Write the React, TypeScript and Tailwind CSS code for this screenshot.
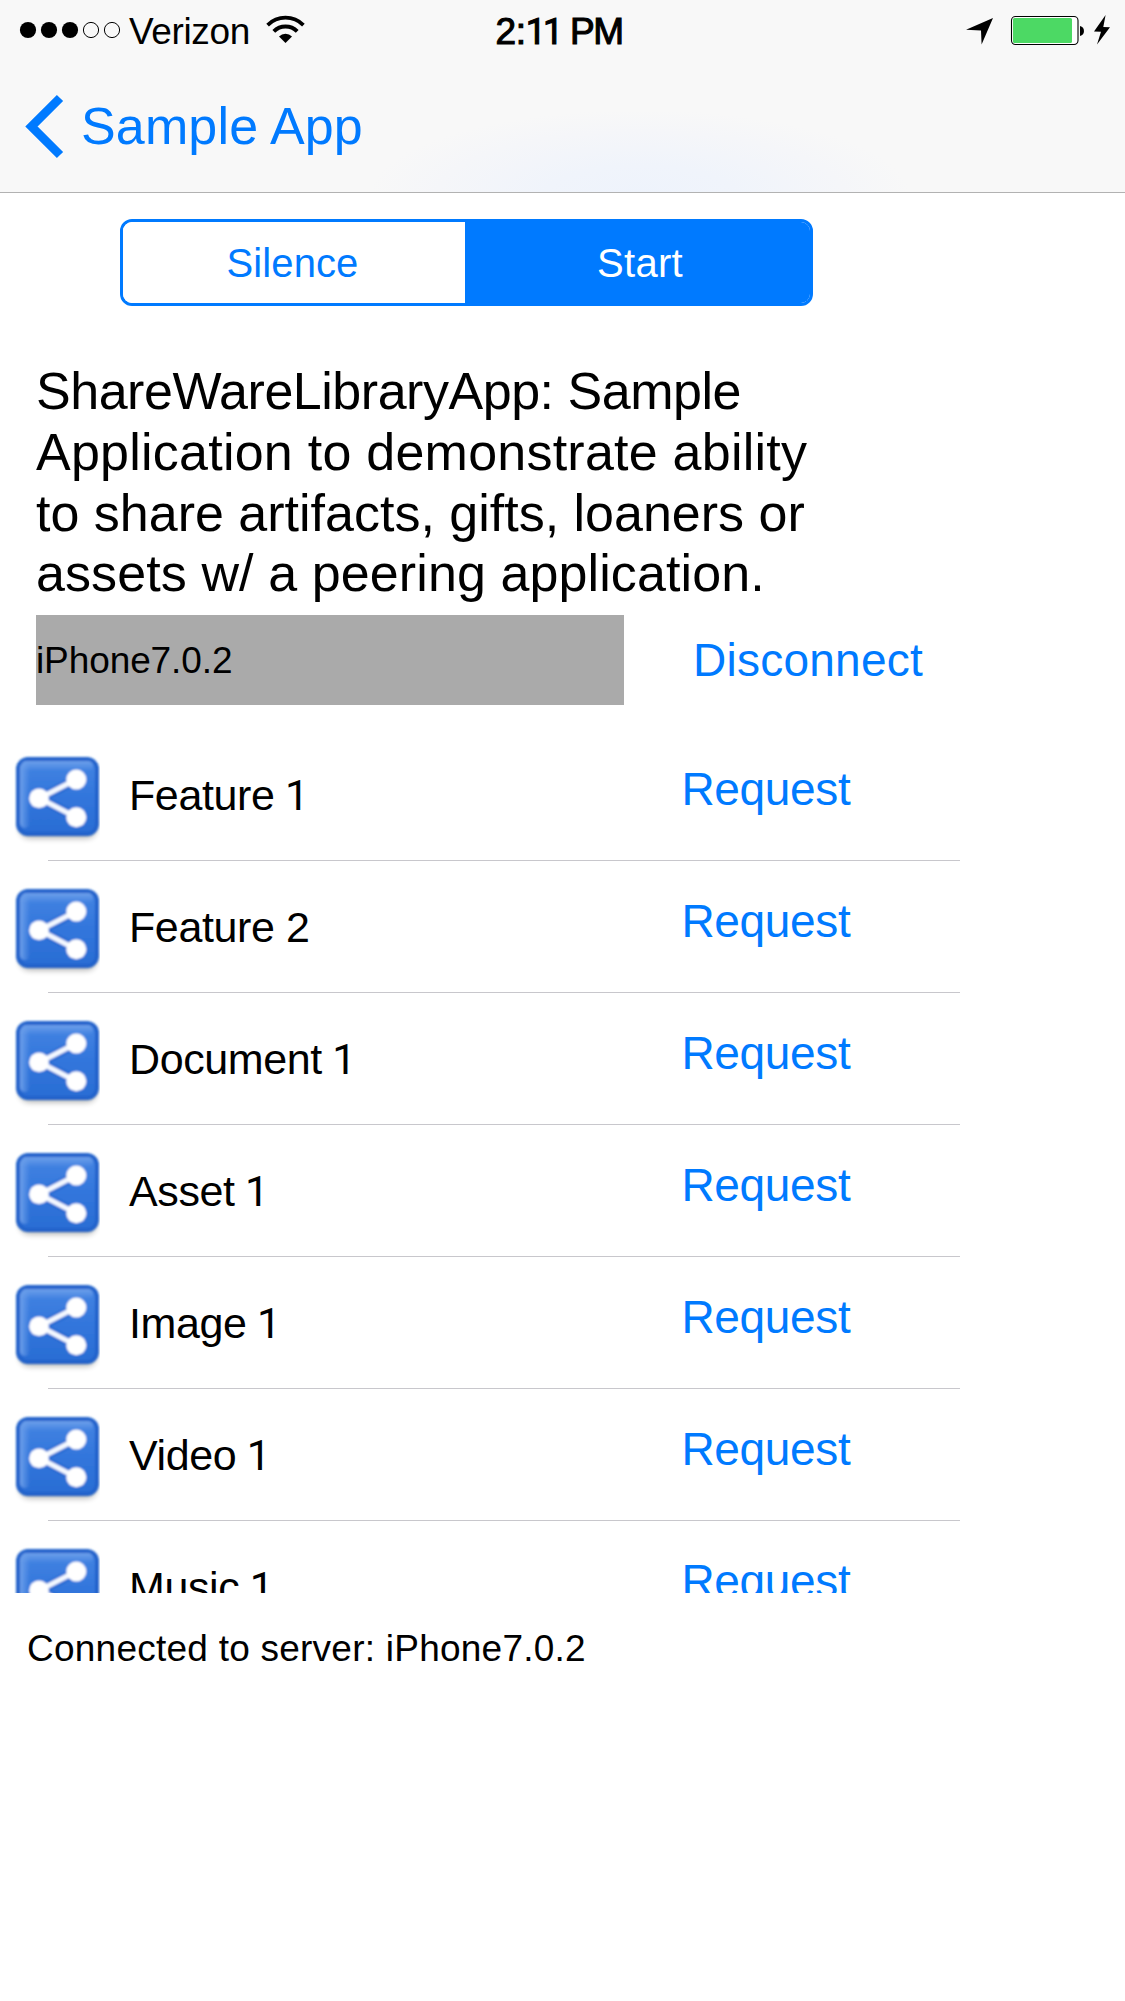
import React from "react";

const items = ["Feature 1", "Feature 2", "Document 1", "Asset 1", "Image 1", "Video 1", "Music 1"];

function Label({ text }: { text: string }) {
  const cut = text.length - 1;
  const digit = text.slice(cut);
  return (
    <span className="text-[43px] tracking-[-0.4px] leading-[133px] whitespace-pre">
      {text.slice(0, cut)}
      {digit === "1" ? <span className="font-['Roboto',sans-serif] text-[42.5px] -ml-[1px]">1</span> : digit}
    </span>
  );
}

function ShareIcon() {
  return (
    <svg className="block w-[100px] h-[110px]" viewBox="0 0 100 110">
      <defs>
        <linearGradient id="face" x1="0" y1="0" x2="0" y2="1">
          <stop offset="0" stopColor="#4484e2" />
          <stop offset="0.5" stopColor="#3276dc" />
          <stop offset="1" stopColor="#2a6dd4" />
        </linearGradient>
        <linearGradient id="shineTop" x1="0" y1="0" x2="0" y2="1">
          <stop offset="0" stopColor="#6c9fea" />
          <stop offset="1" stopColor="#6c9fea" stopOpacity="0" />
        </linearGradient>
        <linearGradient id="shineLeft" x1="0" y1="0" x2="1" y2="0">
          <stop offset="0" stopColor="#6c9fea" />
          <stop offset="1" stopColor="#6c9fea" stopOpacity="0" />
        </linearGradient>
        <filter id="shadow" x="-20%" y="-50%" width="140%" height="200%">
          <feGaussianBlur stdDeviation="3" />
        </filter>
        <filter id="soft">
          <feGaussianBlur stdDeviation="1.1" />
        </filter>
      </defs>
      <rect x="20" y="76" width="76" height="22" rx="9" fill="#000" opacity="0.32" filter="url(#shadow)" />
      <g filter="url(#soft)">
        <rect x="16" y="17" width="83" height="79" rx="12" fill="#2062cb" />
        <rect x="20" y="21" width="75" height="71" rx="8" fill="url(#face)" />
        <rect x="21" y="21" width="72" height="10" rx="5" fill="url(#shineTop)" />
        <rect x="20" y="23" width="10" height="65" rx="5" fill="url(#shineLeft)" />
        <path d="M76 40L39.5 58.5L76 77" fill="none" stroke="#1f5fc8" strokeWidth="10" opacity="0.45" />
        <path d="M76 39.5L39.5 58.3L76 77.3" fill="none" stroke="#f4f8ff" strokeWidth="5" />
        <circle cx="39" cy="58.3" r="9.8" fill="#fff" />
        <circle cx="76.3" cy="39.5" r="10" fill="#fff" />
        <circle cx="76.3" cy="77.3" r="10" fill="#fff" />
      </g>
    </svg>
  );
}

function StatusBar() {
  return (
    <div className="flex h-[60px] w-full items-start text-black">
      <svg className="block w-[129px] h-[60px] shrink-0" viewBox="0 0 129 60">
        {[28, 49, 70].map((x) => (
          <circle key={x} cx={x} cy="30" r="8.1" />
        ))}
        {[91, 112].map((x) => (
          <circle key={x} cx={x} cy="30" r="7.6" fill="none" stroke="#000" strokeWidth="1" />
        ))}
      </svg>
      <span className="w-[131px] shrink-0 whitespace-nowrap text-[37px] leading-[64px] tracking-[-0.35px]">Verizon</span>
      <svg className="block w-[51px] h-[60px] shrink-0" viewBox="260 0 51 60">
        <path d="M267.6 25.1A25.3 25.3 0 0 1 303.4 25.1" fill="none" stroke="#000" strokeWidth="3.7" />
        <path d="M273.8 31.3A16.5 16.5 0 0 1 297.2 31.3" fill="none" stroke="#000" strokeWidth="3.9" />
        <path d="M285.5 43L279 36.5A9.2 9.2 0 0 1 292 36.5Z" />
      </svg>
      <span className="ml-[184.5px] w-[140px] shrink-0 whitespace-pre text-[37px] leading-[64px] tracking-[-0.3px] [-webkit-text-stroke:1.1px_black]">
        2:
        <span className="font-['Roboto',sans-serif] text-[36px] tracking-[-3px]">11</span>
        <span className="ml-[1px] tracking-[-1.5px]"> PM</span>
      </span>
      <svg className="ml-auto block w-[175px] h-[60px] shrink-0" viewBox="950 0 175 60">
        <path d="M993 18L966 29.8L981 30.4L981.6 44.5Z" />
        <rect x="1011.5" y="16.5" width="66.5" height="28" rx="4" fill="#fff" stroke="#000" strokeWidth="1.1" />
        <rect x="1013" y="18" width="59" height="25" rx="1.5" fill="#4cd964" />
        <path d="M1080 26C1085.3 26.8 1085.3 35.2 1080 36Z" />
        <path d="M1105.6 15L1094 31.5L1101 31.8L1097 44.5L1110 27.2L1103.3 27Z" />
      </svg>
    </div>
  );
}

export default function App() {
  return (
    <div className="flex h-[2001px] w-[1125px] flex-col overflow-hidden bg-white font-['Liberation_Sans',Arial,sans-serif] text-black">
      <header className="h-[193px] shrink-0 border-b border-[#b2b2b2] bg-[#f8f8f8] bg-[radial-gradient(ellipse_270px_85px_at_640px_195px,#eef3fc_0%,#f0f4fb_35%,#f5f6f9_75%,#f8f8f8_100%)]">
        <StatusBar />
        <a className="flex h-[132px] items-start text-[#007aff]">
          <svg className="block w-[81px] h-[132px]" viewBox="0 60 81 132">
            <path d="M60 98L31.5 126.5L60 155" fill="none" stroke="#007aff" strokeWidth="8.8" />
          </svg>
          <span className="text-[52px] leading-[133px] tracking-[0.15px]">Sample App</span>
        </a>
      </header>

      <div className="ml-[120px] mt-[26px] flex h-[87px] w-[693px] shrink-0 overflow-hidden rounded-[12px] border-[3px] border-[#007aff] text-[40px]">
        <button className="w-[342px] bg-white pr-[3px] text-[#007aff] tracking-[0.1px] leading-[83px]">Silence</button>
        <button className="flex-1 bg-[#007aff] pl-[5px] text-white tracking-[0.28px] leading-[83px]">Start</button>
      </div>

      <div className="ml-[36px] mt-[55px] shrink-0 whitespace-nowrap text-[52px] leading-[60.75px]">
        <div className="tracking-[-0.47px]">ShareWareLibraryApp: Sample</div>
        <div className="tracking-[0.24px]">Application to demonstrate ability</div>
        <div>to share artifacts, gifts, loaners or</div>
        <div className="tracking-[0.1px]">assets w/ a peering application.</div>
      </div>

      <div className="ml-[36px] mt-[11px] flex h-[90px] shrink-0">
        <div className="w-[588px] bg-[#aaaaaa] text-[37px] leading-[92px] tracking-[-0.1px]">iPhone7.0.2</div>
        <button className="ml-[69px] text-[46px] leading-[91px] tracking-[0.25px] text-[#007aff]">Disconnect</button>
      </div>

      <ul className="mt-[24px] h-[864px] shrink-0 overflow-hidden">
        {items.map((name) => (
          <li key={name} className="h-[132px]">
            <div className="flex h-[131px]">
              <div className="w-[129px] shrink-0 pt-[11px]">
                <ShareIcon />
              </div>
              <div className="w-[552.5px] shrink-0">
                <Label text={name} />
              </div>
              <button className="h-[131px] text-[46px] leading-[121px] pb-[10px] tracking-[-0.35px] text-[#007aff]">Request</button>
            </div>
            <div className="ml-[48px] h-px w-[912px] bg-[#c8c7cc]" />
          </li>
        ))}
      </ul>

      <p className="ml-[27px] mt-[26px] text-[37px] leading-[60px] tracking-[0.24px]">Connected to server: iPhone7.0.2</p>
    </div>
  );
}
